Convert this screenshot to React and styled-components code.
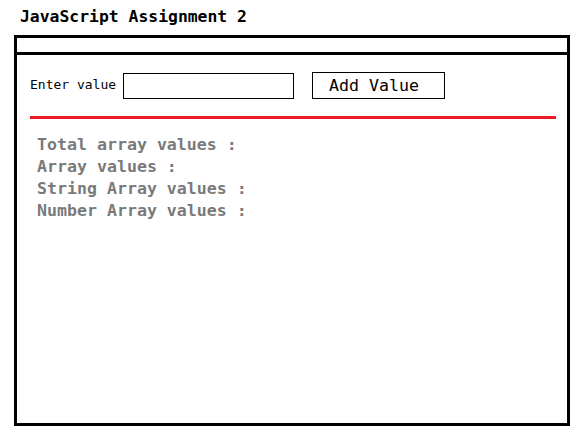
import React from 'react';
import styled, { createGlobalStyle } from 'styled-components';

const GlobalStyle = createGlobalStyle`
    body {
        margin: 0;
        background: #ffffff;
        font-family: 'DejaVu Sans Mono', 'Liberation Mono', monospace;
    }
`;

const Page = styled.div`
    padding: 6px 0 0 14px;
`;

const Title = styled.h1`
    margin: 0 0 7px 6px;
    font-size: 16.4px;
    line-height: 22px;
    font-weight: bold;
    color: #000000;
`;

const Frame = styled.div`
    width: 550px;
    height: 385px;
    border: 3px solid #000000;
    display: flex;
    flex-direction: column;
`;

const HeaderStrip = styled.div`
    height: 14px;
    border-bottom: 3px solid #000000;
`;

const FormRow = styled.div`
    display: flex;
    align-items: center;
    padding: 17px 0 0 13px;
`;

const Label = styled.label`
    font-size: 13px;
    color: #000000;
    margin-right: 7px;
    padding-bottom: 3px;
`;

const ValueInput = styled.input`
    box-sizing: border-box;
    width: 171px;
    height: 26px;
    border: 1px solid #000000;
    border-radius: 0;
    padding: 0 4px;
    outline: none;
`;

const AddButton = styled.button`
    box-sizing: border-box;
    width: 133px;
    height: 27px;
    margin-left: 18px;
    border: 1px solid #000000;
    border-radius: 0;
    background: #ffffff;
    font-family: inherit;
    font-size: 16.6px;
    color: #000000;
    text-align: left;
    padding: 0 0 0 16px;
`;

const RedRule = styled.hr`
    height: 3px;
    margin: 17px 11px 0 13px;
    border: 0;
    background: #ed1c24;
`;

const Stats = styled.div`
    padding: 15px 0 0 20px;
    display: flex;
    flex-direction: column;
`;

const StatLine = styled.div`
    font-size: 16.6px;
    line-height: 22px;
    font-weight: bold;
    color: #7a7a7a;
`;

const stats = [
    'Total array values :',
    'Array values :',
    'String Array values :',
    'Number Array values :',
];

const App = () => {
    return (
        <Page>
            <GlobalStyle />
            <Title>JavaScript Assignment 2</Title>
            <Frame>
                <HeaderStrip />
                <FormRow>
                    <Label htmlFor="value">Enter value</Label>
                    <ValueInput id="value" type="text" />
                    <AddButton>Add Value</AddButton>
                </FormRow>
                <RedRule />
                <Stats>
                    {stats.map(text => (
                        <StatLine key={text}>{text}</StatLine>
                    ))}
                </Stats>
            </Frame>
        </Page>
    );
};

export default App;
